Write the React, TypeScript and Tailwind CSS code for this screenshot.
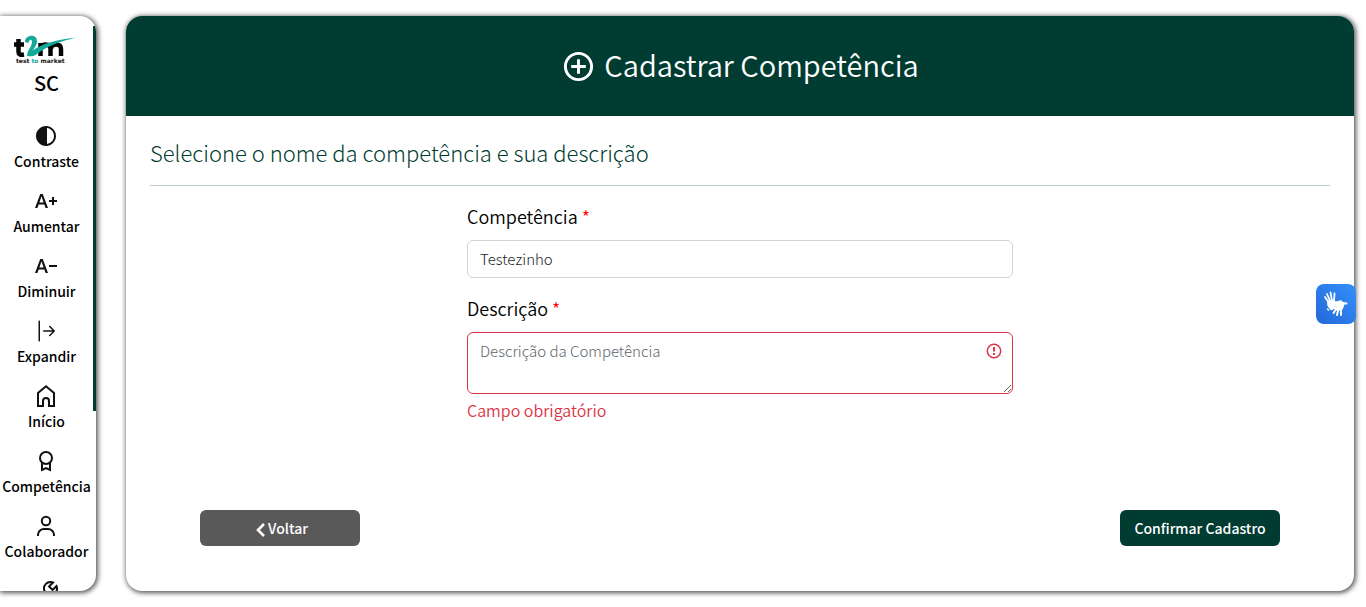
import type { ReactNode } from "react";
import { MdAddCircleOutline, MdContrast, MdTextDecrease, MdTextIncrease } from "react-icons/md";
import { BsArrowBarRight } from "react-icons/bs";
import { BiWrench } from "react-icons/bi";

function Outline({ children }: { children: ReactNode }) {
  return (
    <svg width="24" height="24" viewBox="0 0 24 24" fill="none" stroke="currentColor" strokeWidth="2" aria-hidden="true">
      {children}
    </svg>
  );
}

const items: { label: string; icon: ReactNode }[] = [
  { label: "Contraste", icon: <MdContrast size={24} /> },
  { label: "Aumentar", icon: <MdTextIncrease size={24} /> },
  { label: "Diminuir", icon: <MdTextDecrease size={24} /> },
  { label: "Expandir", icon: <BsArrowBarRight size={24} /> },
  {
    label: "Início",
    icon: (
      <Outline>
        <path d="M4 22V9l8-6.700L20 9v13h-5v-5a3 3 0 0 0-6 0v5z" />
      </Outline>
    ),
  },
  {
    label: "Competência",
    icon: (
      <Outline>
        <circle cx="12" cy="9" r="6" />
        <path d="M8 13.500V21l4-2 4 2v-7.500" />
      </Outline>
    ),
  },
  {
    label: "Colaborador",
    icon: (
      <Outline>
        <circle cx="12" cy="7" r="4.200" />
        <path d="M4 22v-1a6 6 0 0 1 6-6h4a6 6 0 0 1 6 6v1" />
      </Outline>
    ),
  },
  { label: "", icon: <BiWrench size={24} className="ml-1" /> },
];

function Logo() {
  return (
    <svg className="shrink-0" width="66" height="30" viewBox="0 0 66 30" role="img" aria-label="t2m test to market">
      <g fill="none" stroke="#050505" strokeWidth="4.500">
        <path d="M4.500 4v13q0 3.500 5.500 2.500M0 9.500h10" />
        <path d="M26.500 21V8M26.500 14q0-4.500 5-4.500t5 4.500v7M37 14q0-4.500 5-4.500t5 4.500v7" />
      </g>
      <path d="M11 7C11-1 23-1.500 23 6c0 4-2.500 7-4.500 9.500C29 8 42 5 62 2.500 45 7 33 11 23 19c-3 2.500-6 2.500-10 2 0-6 5-9 5-14 0-3-3-3-3.500 1z" fill="#12a999" />
      <text x="2" y="28" fontFamily="DejaVu Sans" fontWeight="700" fontSize="6" fill="#111">
        test <tspan fill="#12a999">to</tspan> market
      </text>
    </svg>
  );
}

function Hands() {
  return (
    <svg width="40" height="40" viewBox="0 0 40 40" fill="none" stroke="currentColor" strokeLinecap="round" strokeLinejoin="round" aria-hidden="true">
      <path d="M13 19L9 13M14.500 18L11 10M16 17L14.500 8.500M18 17L18.500 9.500" strokeWidth="1.800" />
      <path d="M12 17l6-1 2 3-4 2 3 3-4 2-3-4z" fill="currentColor" strokeWidth="1" />
      <path d="M12.500 26l-1-1" strokeWidth="1.500" />
      <path d="M19 18.500l6-1.500 3 3-2 5-5 1-3-2 2-2-3-1z" fill="currentColor" strokeWidth="1.500" />
      <path d="M20 25l-2.500 4M22.500 25l-1.500 6M25 25v6M26.500 19l4 .5" strokeWidth="2" />
    </svg>
  );
}

export default function App() {
  return (
    <div className="flex h-screen gap-[30px] overflow-hidden bg-white pt-4 pr-3 pb-4 font-['Noto_Sans_CJK_SC','Noto_Sans',sans-serif] text-black">
      <aside className="w-24 shrink-0 overflow-hidden rounded-r-2xl bg-white shadow-[1px_1px_5px_1px_#555]">
        <div className="flex h-full justify-between">
          <nav className="flex min-w-0 flex-1 flex-col items-center pt-[19px]">
            <Logo />
            <span className="mb-[22px] text-xl leading-9 font-medium">SC</span>
            <ul className="flex flex-col gap-3.5">
              {items.map((item, index) => (
                <li key={index}>
                  <a href="#" className="flex flex-col items-center text-sm leading-[25px] font-medium">
                    <span className="flex h-[26px] items-center text-[#111]">{item.icon}</span>
                    {item.label}
                  </a>
                </li>
              ))}
            </ul>
          </nav>
          <span className="mt-2.5 h-[385px] w-[3px] bg-[#003c32]" />
        </div>
      </aside>

      <main className="flex min-w-0 flex-1 flex-col overflow-hidden rounded-2xl bg-white shadow-[1px_1px_5px_1px_#555]">
        <header className="flex h-[100px] shrink-0 items-center justify-center gap-2 bg-[#003c32] text-white">
          <MdAddCircleOutline size={35} />
          <h1 className="pb-0.5 text-[29px] font-[350]">Cadastrar Competência</h1>
        </header>
        <form className="flex flex-1 flex-col px-6" onSubmit={(e) => e.preventDefault()}>
          <h2 className="border-b border-[#bfcecb] pt-[18px] pb-[15px] text-[22px] leading-9 font-light text-[#003c32]">
            Selecione o nome da competência e sua descrição
          </h2>
          <div className="mx-auto flex w-full max-w-[546px] flex-col pt-4">
            <label htmlFor="nome" className="mb-2.5 text-lg leading-7 font-[350]">
              Competência <span className="text-[#f00]">*</span>
            </label>
            <input id="nome" defaultValue="Testezinho" className="h-[38px] rounded-md border border-[#ced4da] px-3 pb-0.5 text-[15px] font-light text-[#212529]" />
            <label htmlFor="descricao" className="mt-4 mb-2.5 text-lg leading-7 font-[350]">
              Descrição <span className="text-[#f00]">*</span>
            </label>
            <div className="relative flex">
              <textarea id="descricao" placeholder="Descrição da Competência" className="h-[62px] w-full rounded-md border border-[#dc3545] px-3 py-1.5 text-[15px] leading-6 font-light placeholder:text-[#5c656d]" />
              <svg className="absolute top-2.5 right-2.5" width="18" height="18" viewBox="0 0 18 18" fill="none" stroke="#dc3545" aria-hidden="true">
                <circle cx="9" cy="9" r="6.700" strokeWidth="1.500" />
                <path d="M9 5v4.500M9 11v2" strokeWidth="2" />
              </svg>
            </div>
            <p className="mt-0.5 text-base leading-7 font-[350] text-[#dc3545]">Campo obrigatório</p>
          </div>
          <div className="mt-auto mb-[45px] flex justify-between px-[50px]">
            <button type="button" className="flex h-9 w-40 items-center justify-center gap-[3px] rounded-md bg-[#595959] pl-1 text-sm font-medium text-white">
              <svg className="mt-1" width="9" height="14" viewBox="0 0 9 14" fill="none" stroke="currentColor" strokeWidth="2.600" aria-hidden="true">
                <path d="M8 1L2 7l6 6" />
              </svg>
              Voltar
            </button>
            <button type="submit" className="h-9 w-40 rounded-md bg-[#003c32] text-sm font-medium text-white">
              Confirmar Cadastro
            </button>
          </div>
        </form>
      </main>

      <button type="button" aria-label="Libras" className="fixed top-[284px] right-2.5 flex size-10 items-center justify-center rounded-lg bg-linear-to-tr from-[#2468d8] to-[#3490fa] text-white">
        <Hands />
      </button>
    </div>
  );
}
